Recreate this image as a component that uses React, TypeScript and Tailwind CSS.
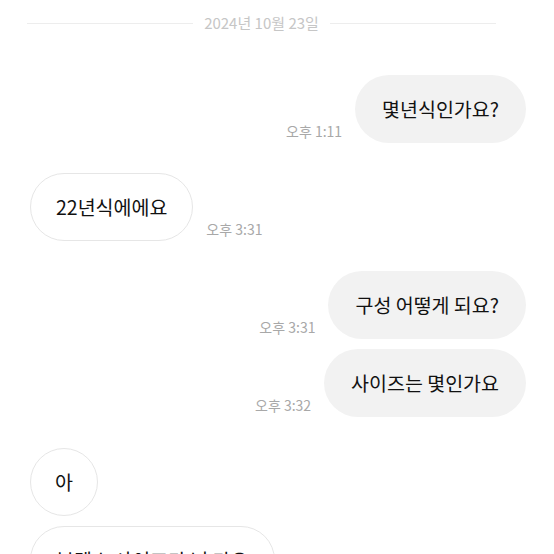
const font = { fontFamily: '"Noto Sans CJK KR", "Noto Sans", sans-serif' };

type Msg = { text: string; mine: boolean; time?: string; round?: boolean; gap: string };

const messages: Msg[] = [
  { text: "몇년식인가요?", mine: true, time: "오후 1:11", gap: "mt-[43px]" },
  { text: "22년식에에요", mine: false, time: "오후 3:31", gap: "mt-[30px]" },
  { text: "구성 어떻게 되요?", mine: true, time: "오후 3:31", gap: "mt-[30px]" },
  { text: "사이즈는 몇인가요", mine: true, time: "오후 3:32", gap: "mt-[10px]" },
  { text: "아", mine: false, round: true, gap: "mt-[31px]" },
  { text: "부텐스 사이즈가 넘 가요", mine: false, gap: "mt-[10px]" },
];

const Bubble = ({ m }: { m: Msg }) => {
  const bubble = (
    <div
      className={
        "h-[68px] flex items-center justify-center rounded-full text-[19.5px] text-[#111111] " +
        (m.round ? "w-[68px] " : m.mine ? "px-[27px] " : "px-[25px] ") +
        (m.mine ? "bg-[#f2f2f2]" : "bg-white border border-[#e6e6e6]")
      }
    >
      {m.text}
    </div>
  );
  const time = m.time ? (
    <span className="text-[14px] text-[#a8a8a8] pb-[1px] whitespace-nowrap">{m.time}</span>
  ) : null;
  return (
    <div className={"flex items-end gap-[13px] " + m.gap + (m.mine ? " justify-end" : " justify-start")}>
      {m.mine ? (
        <>
          {time}
          {bubble}
        </>
      ) : (
        <>
          {bubble}
          {time}
        </>
      )}
    </div>
  );
};

const App = () => {
  return (
    <div className="w-[554px] h-[554px] overflow-hidden bg-white" style={font}>
      <div className="flex items-center gap-[11px] ml-[27px] w-[469px] pt-[14px]">
        <div className="flex-1 h-px bg-[#ededed]" />
        <span className="text-[15px] text-[#c6c6c6] leading-[18px]">2024년 10월 23일</span>
        <div className="flex-1 h-px bg-[#ededed]" />
      </div>
      <div className="pl-[30px] pr-[28px] flex flex-col">
        {messages.map((m, i) => (
          <Bubble key={i} m={m} />
        ))}
      </div>
    </div>
  );
};

export default App;
